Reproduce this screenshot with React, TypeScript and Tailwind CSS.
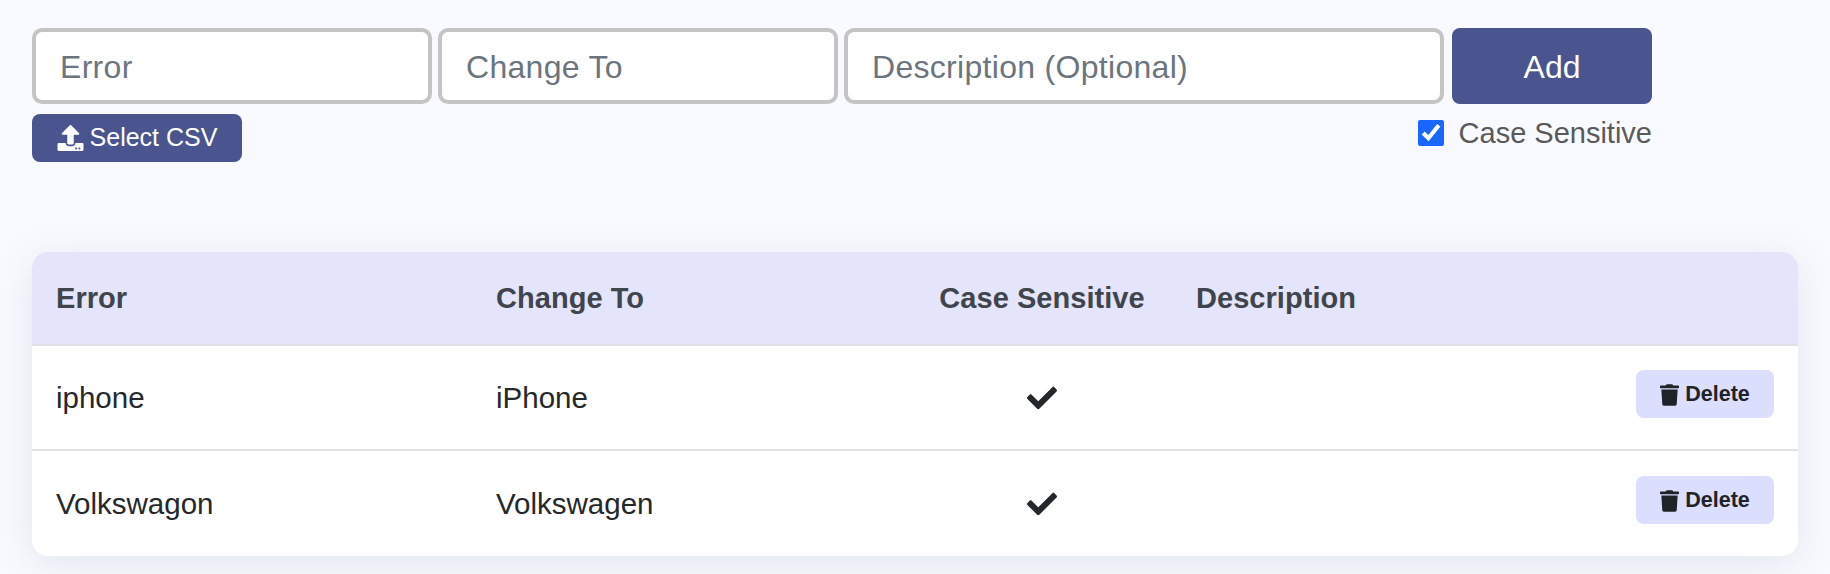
import { FaCheck, FaTrash, FaUpload } from "react-icons/fa";

const rows = [
  { error: "iphone", changeTo: "iPhone" },
  { error: "Volkswagon", changeTo: "Volkswagen" },
];

const inputClass =
  "h-[76px] rounded-[10px] border-[4px] border-[#c4c4c4] bg-white px-[24px] pt-[2px] text-[32px] tracking-[0.3px] text-[#495057] outline-none placeholder:text-[#6c757d]";

export default function App() {
  return (
    <div className="min-h-[574px] bg-[#f9faff] px-[32px] pt-[28px] font-['Liberation_Sans',Arial,sans-serif]">
      {/* Form */}
      <div className="w-[1620px]">
        <div className="flex">
          <input className={`${inputClass} w-[400px]`} placeholder="Error" />
          <input className={`${inputClass} ml-[6px] w-[400px]`} placeholder="Change To" />
          <input className={`${inputClass} ml-[6px] w-[600px]`} placeholder="Description (Optional)" />
          <button className="ml-[8px] h-[76px] w-[200px] rounded-[8px] bg-[#4a548e] pt-[2px] text-[32px] text-white">
            Add
          </button>
        </div>
        <div className="mt-[10px] flex items-start justify-between">
          <button className="flex h-[48px] w-[210px] items-center justify-center gap-[6px] rounded-[8px] bg-[#4a548e] text-[25px] text-white">
            <FaUpload className="h-[26px] w-[27px]" />
            Select CSV
          </button>
          <label className="flex items-center text-[29px] leading-[38px] text-[#5a5a5a]">
            <input type="checkbox" defaultChecked className="h-[26px] w-[26px] accent-[#1a66ff]" />
            <span className="ml-[15px]">Case Sensitive</span>
          </label>
        </div>
      </div>

      {/* Table */}
      <div className="mt-[90px] overflow-hidden rounded-[16px] bg-white shadow-[0_8px_40px_rgba(60,80,120,0.12)]">
        <table className="w-full table-fixed border-collapse">
          <thead>
            <tr className="h-[93px] border-b-[2px] border-[#dee2e6] bg-[#e4e5fa] text-left text-[29px] font-bold tracking-[0.05px] text-[#40444c]">
              <th className="w-[440px] pl-[24px] pt-[2px]">Error</th>
              <th className="w-[440px] pl-[24px] pt-[2px]">Change To</th>
              <th className="w-[260px] pt-[2px] text-center">Case Sensitive</th>
              <th className="pl-[24px] pt-[2px]">Description</th>
              <th className="w-[200px]"></th>
            </tr>
          </thead>
          <tbody>
            {rows.map((row, i) => (
              <tr
                key={row.error}
                className={`text-[29.5px] text-[#25282b] ${i === 0 ? "h-[105px] border-b-[2px] border-[#dee2e6]" : "h-[106px]"}`}
              >
                <td className="pl-[24px] pt-[2px]">{row.error}</td>
                <td className="pl-[24px] pt-[2px]">{row.changeTo}</td>
                <td>
                  <FaCheck className="mx-auto h-[30px] w-[30px] text-[#25282b]" />
                </td>
                <td></td>
                <td className="pr-[24px]">
                  <button className="mb-[8px] ml-auto flex h-[48px] w-[138px] items-center justify-center gap-[6px] rounded-[8px] bg-[#dbdefc] pt-[2px] text-[21.5px] font-bold text-[#1f2328]">
                    <FaTrash className="h-[22px] w-[19px]" />
                    Delete
                  </button>
                </td>
              </tr>
            ))}
          </tbody>
        </table>
      </div>
    </div>
  );
}
